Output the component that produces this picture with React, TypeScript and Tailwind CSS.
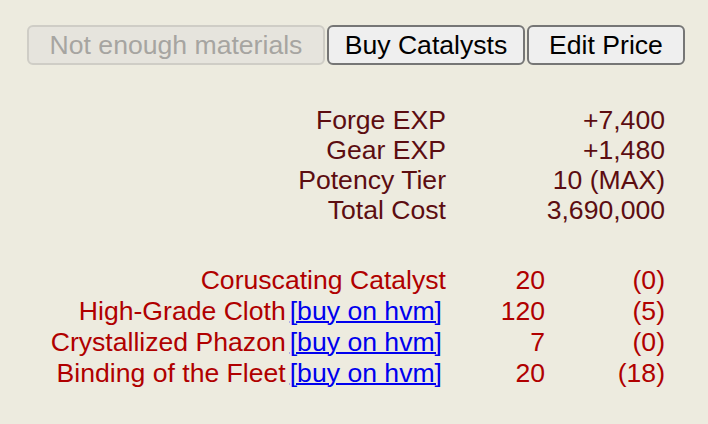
import React from "react";

const stats: [string, string][] = [
  ["Forge EXP", "+7,400"],
  ["Gear EXP", "+1,480"],
  ["Potency Tier", "10 (MAX)"],
  ["Total Cost", "3,690,000"],
];

const mats: { name: string; link: boolean; qty: string; owned: string }[] = [
  { name: "Coruscating Catalyst", link: false, qty: "20", owned: "(0)" },
  { name: "High-Grade Cloth", link: true, qty: "120", owned: "(5)" },
  { name: "Crystallized Phazon", link: true, qty: "7", owned: "(0)" },
  { name: "Binding of the Fleet", link: true, qty: "20", owned: "(18)" },
];

export default function App() {
  return (
    <div
      className="w-[708px] h-[424px] bg-[#EDEBDF] overflow-hidden text-[26.6px]"
      style={{ fontFamily: '"Liberation Sans", Arial, sans-serif' }}
    >
      <div className="flex pt-[25px] pl-[27px] gap-[2px]">
        <button
          disabled
          className="w-[298px] h-[40px] rounded-[6px] border-2 border-[#cfcdc6] bg-[#e6e4dd] text-[#a6a5a1] leading-none"
        >
          Not enough materials
        </button>
        <button className="w-[198px] h-[40px] rounded-[6px] border-2 border-[#767676] bg-[#efefef] text-black leading-none">
          Buy Catalysts
        </button>
        <button className="w-[158px] h-[40px] rounded-[6px] border-2 border-[#767676] bg-[#efefef] text-black leading-none">
          Edit Price
        </button>
      </div>

      <div className="mt-[40px] grid grid-cols-[446px_219px] text-[#5C0D11] leading-[30px]">
        {stats.map(([k, v]) => (
          <React.Fragment key={k}>
            <div className="text-right">{k}</div>
            <div className="text-right">{v}</div>
          </React.Fragment>
        ))}
      </div>

      <div className="mt-[40px] grid grid-cols-[446px_99px_120px] text-[#B00000] leading-[31px]">
        {mats.map((m) => (
          <React.Fragment key={m.name}>
            <div className="flex justify-end whitespace-nowrap">
              <span>{m.name}</span>
              {m.link && (
                <a
                  href="#"
                  className="ml-[4px] mr-[4px] text-[#0000EE] underline decoration-[2px]"
                >
                  [buy on hvm]
                </a>
              )}
            </div>
            <div className="text-right">{m.qty}</div>
            <div className="text-right">{m.owned}</div>
          </React.Fragment>
        ))}
      </div>
    </div>
  );
}
